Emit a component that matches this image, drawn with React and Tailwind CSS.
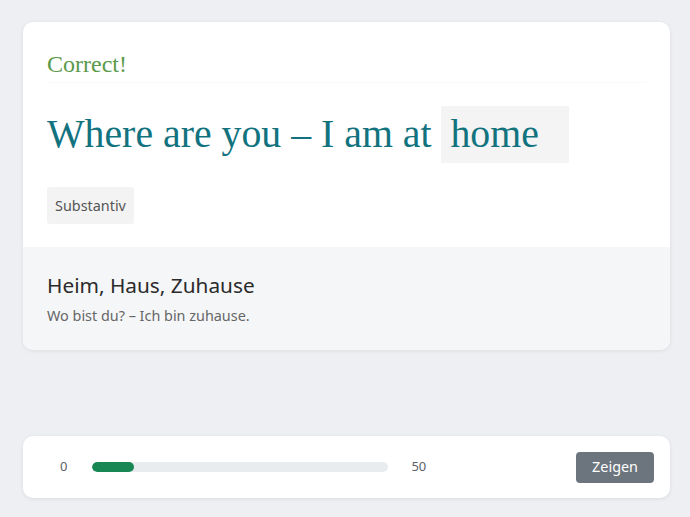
import React from "react";

const serif = { fontFamily: '"Liberation Serif", "Times New Roman", serif' };

const App = () => {
  const progress = 14;

  return (
    <div className="min-h-screen w-full bg-[#eeeff3] pt-[22px] pl-[23px] font-['Noto_Sans',sans-serif]">
      {/* Card */}
      <div className="w-[647px] rounded-[10px] bg-white shadow-[0_1px_4px_rgba(0,0,0,0.08)] overflow-hidden">
        <div className="px-6 pt-[25px] pb-[23px]">
          <div
            className="text-[24px] leading-[35px] text-[#5b9a4b] border-b border-[#f9f9f9]"
            style={serif}
          >
            Correct!
          </div>

          <h1
            className="mt-[23px] text-[39.8px] leading-[57px] text-[#12737f] whitespace-nowrap"
            style={serif}
          >
            Where are you – I am at{" "}
            <span className="inline-block align-top h-[57px] w-[128px] pl-[9px] bg-[#f4f4f4]">
              home
            </span>
          </h1>

          <div className="mt-6">
            <span className="inline-flex items-center h-[37px] px-2 rounded-[3px] bg-[#f3f3f3] text-[14.4px] text-[#555]">
              Substantiv
            </span>
          </div>
        </div>

        <div className="bg-[#f5f6f8] px-6 pt-6 pb-6">
          <div className="text-[20.8px] leading-[28px] text-[#2b2b2b]">
            Heim, Haus, Zuhause
          </div>
          <div className="mt-[6px] text-[14.4px] leading-[21px] text-[#666]">
            Wo bist du? – Ich bin zuhause.
          </div>
        </div>
      </div>

      {/* Progress */}
      <div className="mt-[86px] w-[647px] h-[62px] rounded-[10px] bg-white shadow-[0_1px_4px_rgba(0,0,0,0.08)] flex items-center pl-[37px] pr-4">
        <span className="text-[13px] text-[#5c6168]">0</span>
        <div className="ml-[25px] w-[296px] h-[10px] rounded-full bg-[#e9ecef] overflow-hidden">
          <div
            className="h-full rounded-full bg-[#198754]"
            style={{ width: `${progress}%` }}
          />
        </div>
        <span className="ml-[23px] text-[13px] text-[#5c6168]">50</span>
        <button className="ml-auto h-[31px] px-4 rounded-[4px] bg-[#6c757d] text-white text-[14.4px]">
          Zeigen
        </button>
      </div>
    </div>
  );
};

export default App;
